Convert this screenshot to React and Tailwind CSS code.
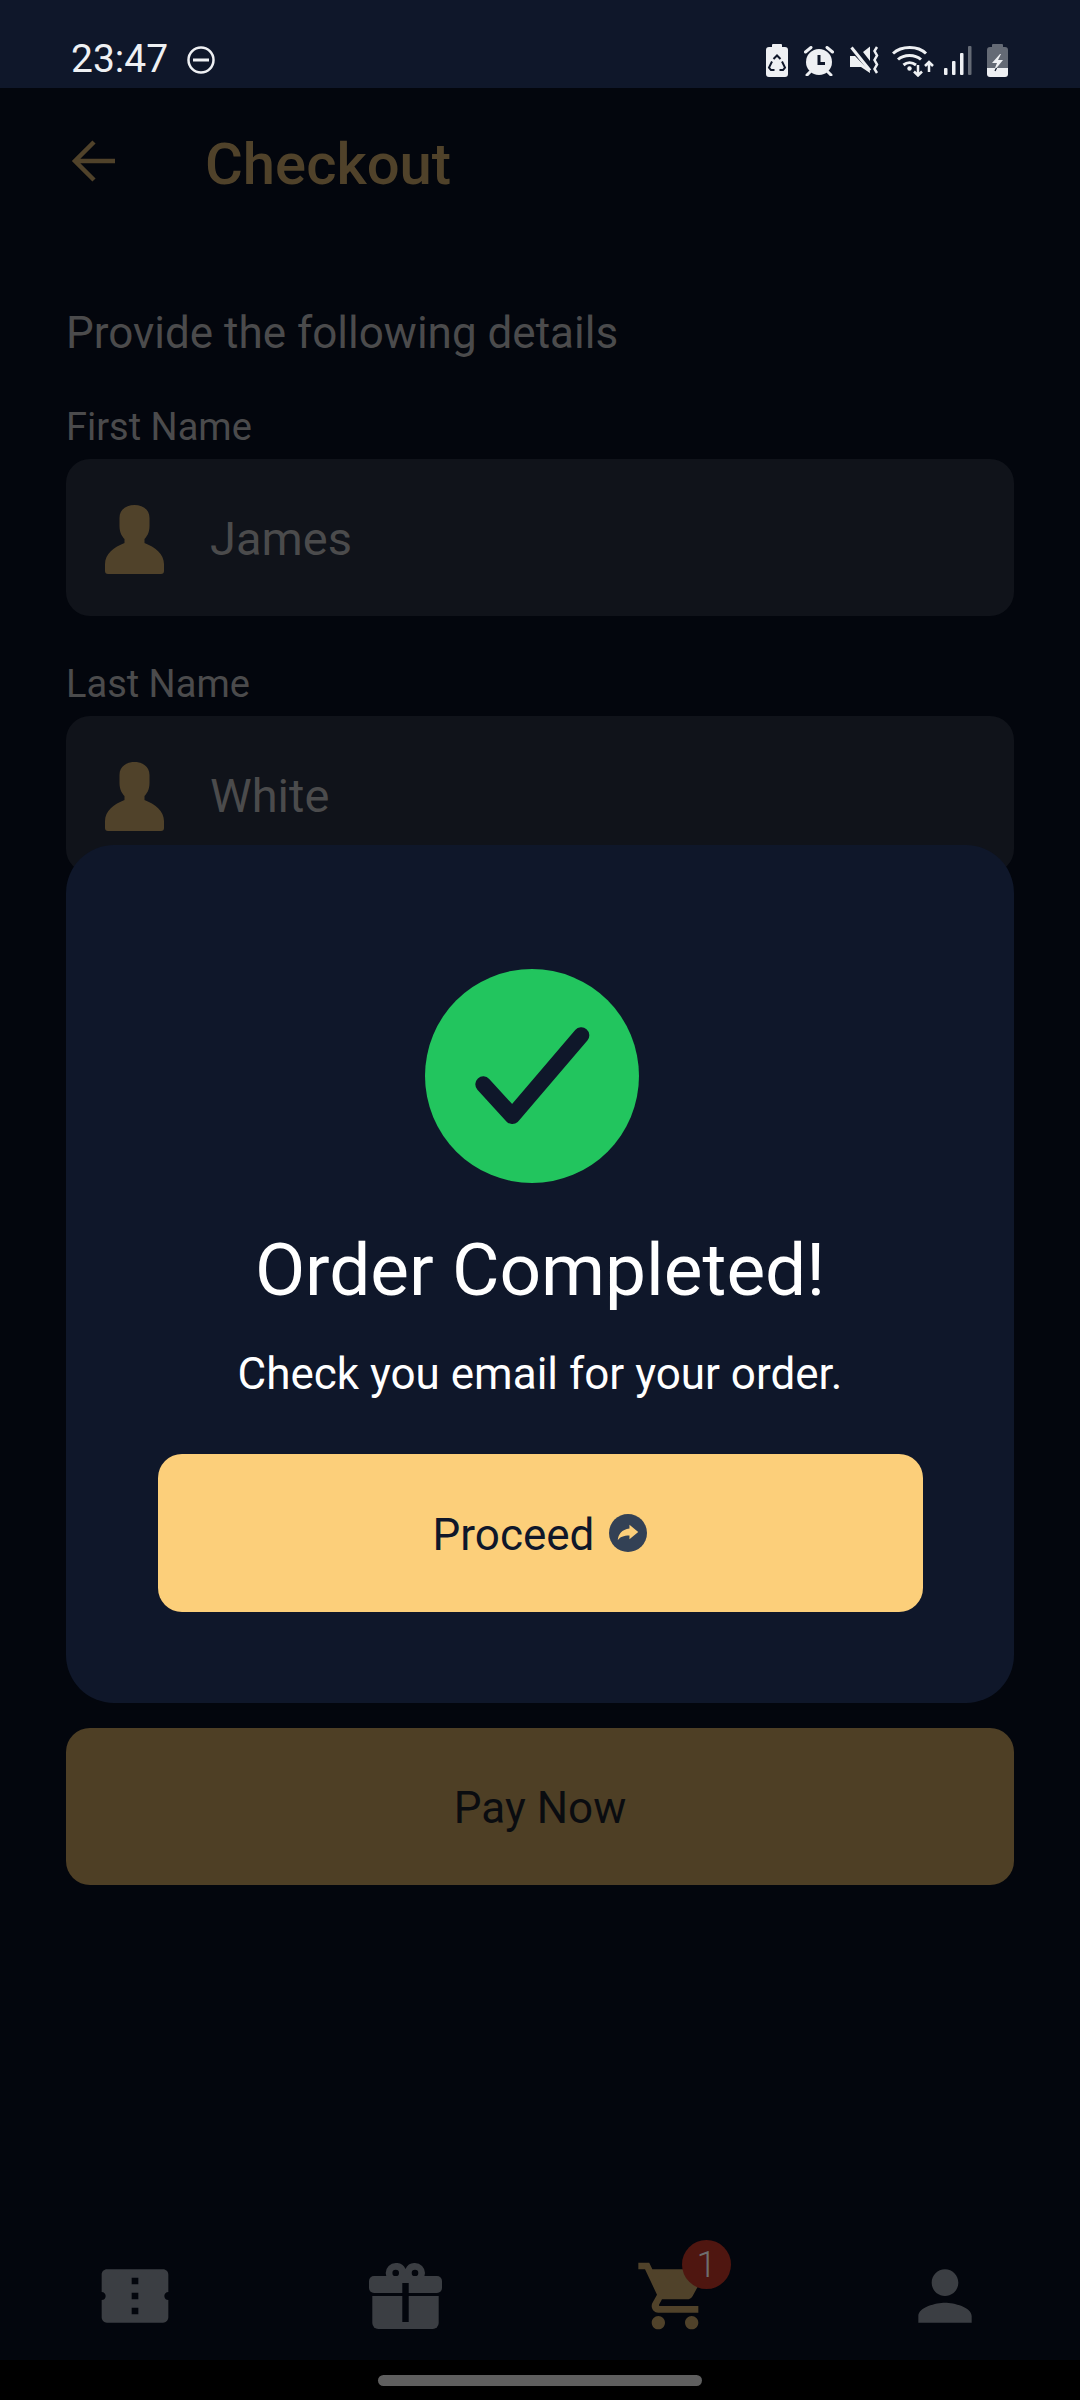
import React from 'react';

const font = { fontFamily: 'Roboto, sans-serif' };

function Person({ className }) {
    return (
        <svg viewBox="0 0 59 69" className={className} fill="#50422a">
            <path d="M29.500 0C37 0 44.500 4 44.500 13V21C44.500 28 41.500 32 39.500 34V38C50 42 59 49 59 59V66C59 68 58 69 56 69H3C1 69 0 68 0 66V59C0 49 9 42 19.500 38V34C17.500 32 14.500 28 14.500 21V13C14.500 4 22 0 29.500 0Z" />
        </svg>
    );
}

function StatusIcons() {
    return (
        <div className="absolute right-[72px] top-[44px] flex items-start">
            {/* battery saver */}
            <svg width="22" height="33" viewBox="0 0 22 33">
                <path d="M7 0h8a1 1 0 0 1 1 1v2h3a3 3 0 0 1 3 3v24a3 3 0 0 1-3 3H3a3 3 0 0 1-3-3V6a3 3 0 0 1 3-3h3V1a1 1 0 0 1 1-1z" fill="#eef0f3" />
                <path d="M7.500 15L11 11.500L14.500 15M16 17.500L19 23.500L17 26H13.500M8.500 26H5L3 23.500L6 17.500" fill="none" stroke="#0f172a" strokeWidth="2" />
            </svg>
            {/* alarm */}
            <svg width="30" height="30" viewBox="0 0 30 30" className="ml-[16px] mt-[2px]">
                <circle cx="15" cy="16" r="13" fill="#eef0f3" />
                <path d="M15 9V17.500H21" fill="none" stroke="#0f172a" strokeWidth="3" />
                <path d="M1.500 6L7 1.500M28.500 6L23 1.500M6 26L3 29M24 26L27 29" stroke="#eef0f3" strokeWidth="3" strokeLinecap="round" />
            </svg>
            {/* muted with vibrate */}
            <svg width="30" height="30" viewBox="0 0 30 30" className="ml-[15px] mt-[2px]">
                <path d="M1 10H6L21 25.500V27L12 21H1zM14 6L21 0.500V15z" fill="#eef0f3" />
                <path d="M2.500 1.500L21 24.500" stroke="#eef0f3" strokeWidth="3" />
                <path d="M28 1L25.500 5L28 9.500L25.500 14L28 18.500L25.500 23L28 27" fill="none" stroke="#eef0f3" strokeWidth="2.500" />
            </svg>
            {/* wifi with arrows */}
            <svg width="43" height="32" viewBox="0 0 43 32" className="ml-[13px] mt-[1px]">
                <path d="M1 8.500C9.500 .5 26 .5 34 8.500M6 14.500C12 9 23 9 29 14.500M11.500 20C15 17 20 17 24 20" fill="none" stroke="#eef0f3" strokeWidth="3" />
                <circle cx="17.500" cy="23.500" r="2.200" fill="#eef0f3" />
                <path d="M26 20v10M22 26.500l4 4 4-4M37 27V17M33 21l4-4 4 4" fill="none" stroke="#eef0f3" strokeWidth="2.500" />
            </svg>
            {/* signal */}
            <svg width="28" height="30" viewBox="0 0 28 30" className="ml-[9px] mt-[2px]">
                <rect x="0" y="22" width="3.500" height="7" rx="1" fill="#eef0f3" />
                <rect x="8" y="15" width="3.500" height="14" rx="1" fill="#eef0f3" />
                <rect x="16" y="7" width="3.500" height="22" rx="1" fill="#eef0f3" />
                <rect x="24" y="0" width="3.500" height="29" rx="1" fill="#646a75" />
            </svg>
            {/* charging battery */}
            <svg width="21" height="33" viewBox="0 0 21 33" className="ml-[15px]">
                <path d="M6 0h9a1 1 0 0 1 1 1v2h2a3 3 0 0 1 3 3v18H0V6a3 3 0 0 1 3-3h2V1a1 1 0 0 1 1-1z" fill="#646a75" />
                <path d="M0 24h21v6a3 3 0 0 1-3 3H3a3 3 0 0 1-3-3z" fill="#eef0f3" />
                <path d="M13 10L5 19h5l-2 5h1.500L16 16h-5l3-6z" fill="#eef0f3" />
                <path d="M9.500 24l-1.500 3" stroke="#0f172a" strokeWidth="1.200" />
            </svg>
        </div>
    );
}

function Field({ label, value }) {
    return (
        <div>
            <p className="pt-[2px] text-[38px] leading-[42px] text-[#4b4b4c]">{label}</p>
            <div className="mt-[11px] flex h-[157px] items-center rounded-[24px] bg-[#10131a] pl-[39px]">
                <Person className="mt-[4px] h-[69px] w-[59px] shrink-0" />
                <span className="ml-[46px] mt-[4px] text-[47px] text-[#4b4b4c]">{value}</span>
            </div>
        </div>
    );
}

function BottomNav() {
    return (
        <div className="grid h-[128px] grid-cols-4">
            <div className="flex items-center justify-center">
                <svg viewBox="0 0 24 24" className="h-[80px] w-[80px]" fill="#3b3e43">
                    <path fillRule="evenodd" d="M22 10.800V5.600C22 4.700 21.300 4 20.400 4H3.600C2.700 4 2 4.700 2 5.600v5.200c.7 0 1.200.5 1.200 1.200s-.5 1.200-1.200 1.200v5.200c0 .9.7 1.600 1.600 1.600h16.800c.9 0 1.600-.7 1.600-1.600v-5.200c-.7 0-1.200-.5-1.200-1.200s.5-1.200 1.200-1.200zM13 17.500h-2v-2h2v2zm0-4.500h-2v-2h2v2zm0-4.500h-2v-2h2v2z" />
                </svg>
            </div>
            <div className="flex items-center justify-center">
                <svg viewBox="0 0 73 66" className="h-[66px] w-[73px]" fill="#3b3e43">
                    <path fillRule="evenodd" d="M26.700 0a10 10 0 0 1 9.800 6A10 10 0 0 1 46 0a10 10 0 0 1 10 10a10 10 0 0 1-10 10H26.700a10 10 0 0 1 0-20zm0 6.700a3.300 3.300 0 1 0 0 6.600a3.300 3.300 0 0 0 0-6.600zM46 6.700a3.300 3.300 0 1 0 0 6.600a3.300 3.300 0 0 0 0-6.600z" />
                    <rect x="0" y="13" width="73" height="17" rx="5" />
                    <path d="M3.300 33H69.700V60a6 6 0 0 1-6 6H9.300a6 6 0 0 1-6-6z" />
                    <rect x="33.300" y="20" width="6.400" height="39" fill="#03060d" />
                </svg>
            </div>
            <div className="flex items-center justify-center">
                <div className="relative h-[80px] w-[80px]">
                    <svg viewBox="0 0 24 24" className="h-[80px] w-[80px]" fill="#50422a">
                        <path d="M7 18c-1.100 0-1.990.9-1.990 2S5.900 22 7 22s2-.9 2-2-.9-2-2-2zM1 2v2h2l3.600 7.590-1.350 2.450c-.16.280-.25.610-.25.960 0 1.100.9 2 2 2h12v-2H7.420c-.14 0-.25-.11-.25-.25l.03-.12.9-1.630h7.450c.75 0 1.410-.41 1.750-1.030l3.580-6.490c.08-.14.120-.31.120-.48 0-.55-.45-1-1-1H5.210l-.94-2H1zm16 16c-1.100 0-1.990.9-1.990 2s.89 2 1.990 2 2-.9 2-2-.9-2-2-2z" />
                    </svg>
                    <div className="absolute left-[47px] top-[-16px] flex h-[49px] w-[49px] items-center justify-center rounded-full bg-[#4f1610] text-[36px] font-light text-[#6e6e6e]">1</div>
                </div>
            </div>
            <div className="flex items-center justify-center">
                <svg viewBox="0 0 24 24" className="h-[80px] w-[80px]" fill="#3b3e43">
                    <path d="M12 12c2.210 0 4-1.790 4-4s-1.790-4-4-4-4 1.790-4 4 1.790 4 4 4zm0 2c-2.670 0-8 1.340-8 4v2h16v-2c0-2.660-5.330-4-8-4z" />
                </svg>
            </div>
        </div>
    );
}

export default function App() {
    return (
        <div className="relative flex h-[2400px] w-[1080px] flex-col overflow-hidden bg-[#03060d]" style={font}>
            {/* Status bar */}
            <div className="relative flex h-[88px] shrink-0 bg-[#0f172a] pl-[71px] pt-[36px]">
                <span className="text-[39px] leading-[46px] text-[#eef0f3]">23:47</span>
                <svg width="30" height="30" viewBox="0 0 30 30" className="ml-[18px] mt-[9px]">
                    <circle cx="15" cy="15" r="12.500" fill="none" stroke="#eef0f3" strokeWidth="2.500" />
                    <path d="M7 15h16" stroke="#eef0f3" strokeWidth="3" />
                </svg>
                <StatusIcons />
            </div>

            {/* Header */}
            <div className="flex h-[146px] shrink-0 items-center pl-[71px]">
                <svg width="46" height="44" viewBox="0 0 46 44" fill="none" stroke="#50422a" strokeWidth="4.500">
                    <path d="M44 22H5M23 3L4 22l19 19" />
                </svg>
                <span className="ml-[88px] mt-[6px] text-[58px] font-medium text-[#50422a]">Checkout</span>
            </div>

            {/* Form */}
            <div className="flex flex-1 flex-col px-[66px]">
                <p className="mt-[73px] pt-[2px] text-[44px] leading-[48px] text-[#4b4b4c]">Provide the following details</p>
                <div className="mt-[47px]">
                    <Field label="First Name" value="James" />
                </div>
                <div className="mt-[45px]">
                    <Field label="Last Name" value="White" />
                </div>
                <button className="mt-[855px] h-[157px] rounded-[24px] bg-[#4e3f25] pt-[3px] text-[44px] text-[#0a0c10]">Pay Now</button>
            </div>

            <BottomNav />

            {/* Home indicator */}
            <div className="flex h-[40px] shrink-0 justify-center bg-black pt-[15px]">
                <div className="h-[11px] w-[324px] rounded-full bg-[#5f5f5f]" />
            </div>

            {/* Success dialog */}
            <div className="absolute left-[66px] top-[845px] flex h-[858px] w-[948px] flex-col items-center rounded-[48px] bg-[#0f172a] pt-[124px]">
                <svg width="214" height="214" viewBox="0 0 214 214" className="mr-[16px] shrink-0">
                    <circle cx="107" cy="107" r="107" fill="#22c55e" />
                    <path d="M58.300 115.300L87.300 147L156.300 66.300" fill="none" stroke="#0f172a" strokeWidth="16" strokeLinecap="round" strokeLinejoin="round" />
                </svg>
                <h2 className="mt-[45px] text-[73px] leading-[84px] text-white">Order Completed!</h2>
                <p className="mt-[37px] text-[44px] leading-[50px] text-white">Check you email for your order.</p>
                <button className="mt-[55px] flex h-[158px] w-[765px] shrink-0 items-center justify-center rounded-[24px] bg-[#fccf7a] text-[44px] text-[#0f172a]">
                    <span className="mt-[3px]">Proceed</span>
                    <svg width="38" height="38" viewBox="0 0 39 39" className="ml-[15px] mt-[-1px]">
                        <circle cx="19.500" cy="19.500" r="19.500" fill="#334155" />
                        <path d="M21 11L30 18.500L21 26V22C15 22 11 23.500 9 27C9.500 21 13 16 21 15Z" fill="#fccf7a" />
                    </svg>
                </button>
            </div>
        </div>
    );
}
